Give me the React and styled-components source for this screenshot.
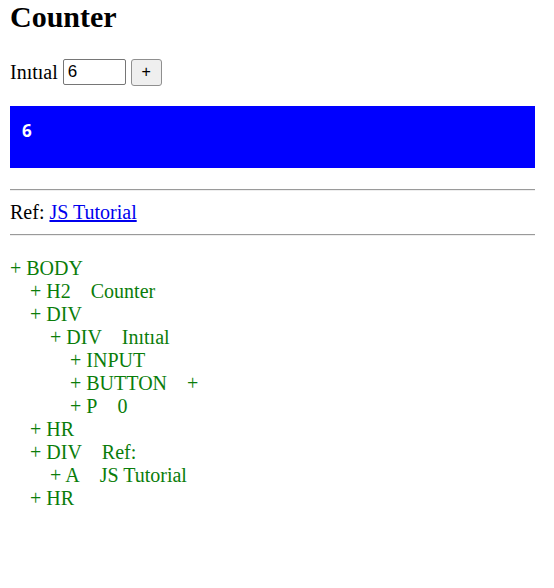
import React, { useState } from "react";
import styled, { createGlobalStyle } from "styled-components";

const GlobalStyle = createGlobalStyle`
    body {
        margin: 0 19px 0 10px;
        font-family: "Liberation Serif", "Times New Roman", serif;
        font-size: 20px;
        line-height: 23px;
        color: #000;
        background: #fff;
    }
`;

const Title = styled.h2`
    margin: 0;
    font-size: 30px;
    line-height: 34px;
    font-weight: bold;
`;

const Row = styled.div`
    display: flex;
    align-items: center;
    gap: 5px;
    margin-top: 25px;
    height: 26px;
`;

const NumInput = styled.input`
    box-sizing: border-box;
    width: 63px;
    height: 26px;
    padding: 1px 4px;
    border: 1px solid #767676;
    border-radius: 2px;
    font-family: "Liberation Sans", Arial, sans-serif;
    font-size: 17px;
    color: #000;
`;

const PlusButton = styled.button`
    box-sizing: border-box;
    width: 31px;
    height: 27px;
    border: 1px solid #8f8f8f;
    border-radius: 3px;
    background: #efefef;
    font-family: "Liberation Sans", Arial, sans-serif;
    font-size: 16px;
    color: #000;
    padding: 0;
`;

const Display = styled.p`
    box-sizing: border-box;
    margin: 21px 0 0;
    height: 62px;
    padding: 13px 12px 0;
    background: #0000ff;
    color: #fff;
    font-family: "Open Sans", "Noto Sans", sans-serif;
    font-weight: 700;
    font-size: 17px;
    line-height: 24px;
`;

const Rule = styled.hr`
    margin: ${(p) => p.$top}px 0 0;
    height: 0;
    border: 0;
    border-top: 1px solid #9a9a9a;
    border-bottom: 1px solid #eeeeee;
`;

const RefLine = styled.div`
    margin-top: 10px;
`;

const Link = styled.a`
    color: #0000ee;
    text-decoration: underline;
`;

const Tree = styled.div`
    margin-top: 21px;
    color: #0a7d0a;
`;

const Node = styled.div`
    padding-left: ${(p) => p.$depth * 20}px;
    white-space: pre;
`;

const nodes = [
    { depth: 0, tag: "BODY" },
    { depth: 1, tag: "H2", text: "Counter" },
    { depth: 1, tag: "DIV" },
    { depth: 2, tag: "DIV", text: "Inıtıal" },
    { depth: 3, tag: "INPUT" },
    { depth: 3, tag: "BUTTON", text: "+" },
    { depth: 3, tag: "P", text: "0" },
    { depth: 1, tag: "HR" },
    { depth: 1, tag: "DIV", text: "Ref:" },
    { depth: 2, tag: "A", text: "JS Tutorial" },
    { depth: 1, tag: "HR" },
];

export default function App() {
    const [count, setCount] = useState(6);

    return (
        <>
            <GlobalStyle />
            <Title>Counter</Title>
            <Row>
                <span>Inıtıal</span>
                <NumInput value={count} onChange={(e) => setCount(e.target.value)} />
                <PlusButton onClick={() => setCount(Number(count) + 1)}>+</PlusButton>
            </Row>
            <Display>{count}</Display>
            <Rule $top={21} />
            <RefLine>
                Ref: <Link href="#">JS Tutorial</Link>
            </RefLine>
            <Rule $top={10} />
            <Tree>
                {nodes.map((n, i) => (
                    <Node key={i} $depth={n.depth}>
                        {"+ " + n.tag}
                        {n.text ? "\u00a0\u00a0\u00a0\u00a0" + n.text : ""}
                    </Node>
                ))}
            </Tree>
        </>
    );
}
